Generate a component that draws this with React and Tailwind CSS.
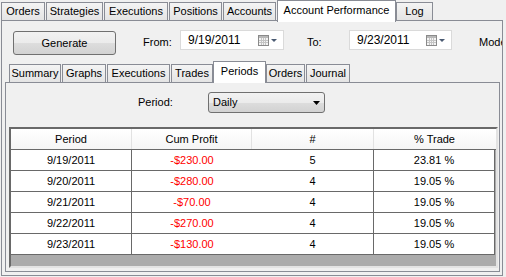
import React from 'react'

const topTabs = [
  { label: 'Orders', cls: 'ml-[1px] w-[44px]' },
  { label: 'Strategies', cls: 'ml-[1px] w-[57px]' },
  { label: 'Executions', cls: 'ml-[1px] w-[64px]' },
  { label: 'Positions', cls: 'ml-[1px] w-[53px]' },
  { label: 'Accounts', cls: 'ml-[1px] w-[53px]' },
  { label: 'Account Performance', cls: 'ml-[1px] w-[119px]', active: true },
  { label: 'Log', cls: 'w-[37px]' },
]

const innerTabs = [
  { label: 'Summary', cls: 'ml-[7px] w-[52px]' },
  { label: 'Graphs', cls: 'ml-[1px] w-[44px]' },
  { label: 'Executions', cls: 'ml-[1px] w-[63px]' },
  { label: 'Trades', cls: 'ml-[1px] w-[42px]' },
  { label: 'Periods', cls: 'w-[53px]', active: true },
  { label: 'Orders', cls: 'w-[39px]' },
  { label: 'Journal', cls: 'ml-[1px] w-[44px]' },
]

const rows = [
  ['9/19/2011', '-$230.00', '5', '23.81 %'],
  ['9/20/2011', '-$280.00', '4', '19.05 %'],
  ['9/21/2011', '-$70.00', '4', '19.05 %'],
  ['9/22/2011', '-$270.00', '4', '19.05 %'],
  ['9/23/2011', '-$130.00', '4', '19.05 %'],
]

function Tab({ label, cls, active, topOffset }) {
  if (active) {
    return (
      <div
        className={`${cls} relative z-10 flex h-[22px] shrink-0 items-start justify-center border border-b-0 border-[#898c95] bg-white pt-[3px] text-[11px] leading-[13px] text-black`}
      >
        {label}
      </div>
    )
  }
  return (
    <div
      className={`${cls} ${topOffset} flex h-[18px] shrink-0 items-center justify-center border border-b-0 border-[#898c95] bg-gradient-to-b from-[#f4f4f4] to-[#e4e4e4] text-[11px] leading-[13px] text-black`}
    >
      {label}
    </div>
  )
}

function CalendarIcon() {
  return (
    <svg width="19" height="11" viewBox="0 0 19 11">
      <rect x="0.5" y="0.5" width="10" height="10" fill="#f4f4f4" stroke="#8a8a8a" />
      <rect x="1" y="1" width="9" height="2" fill="#b8b8b8" />
      <path d="M1 5.5h9M1 7.5h9M3.5 3v7M5.5 3v7M7.5 3v7" stroke="#c4c4c4" />
      <path d="M13 4h6l-3 3z" fill="#4a5a72" />
    </svg>
  )
}

function DateBox({ value, cls }) {
  return (
    <div className={`${cls} flex h-[20px] shrink-0 items-center border border-[#dadada] bg-white pl-[7px] pr-[6px]`}>
      <span className="flex-1 text-[12px] leading-[14px] text-black">{value}</span>
      <CalendarIcon />
    </div>
  )
}

export default function App() {
  return (
    <div className="h-[277px] w-[506px] overflow-hidden bg-[#f0f0f0] font-[family-name:'Liberation_Sans',Arial,sans-serif] text-black">
      <div className="flex h-[20px] items-start">
        {topTabs.map((t) => (
          <Tab key={t.label} {...t} topOffset="mt-[2px]" />
        ))}
      </div>

      <div className="ml-[1px] h-[256px] w-[502px] overflow-hidden border border-[#898c95] bg-[#f0f0f0]">
        <div className="mt-[9px] flex h-[25px] items-start whitespace-nowrap">
          <button className="ml-[11px] mt-[1px] h-[24px] w-[103px] shrink-0 rounded-[3px] border border-[#707070] bg-[linear-gradient(180deg,#f2f2f2_0%,#ebebeb_50%,#dddddd_51%,#d2d2d2_100%)] text-[11px] leading-[13px] text-black">
            Generate
          </button>
          <span className="ml-[27px] mt-[6px] w-[37px] shrink-0 text-[11px] leading-[13px]">From:</span>
          <DateBox value="9/19/2011" cls="w-[104px]" />
          <span className="ml-[23px] mt-[6px] w-[42px] shrink-0 text-[11px] leading-[13px]">To:</span>
          <DateBox value="9/23/2011" cls="w-[103px]" />
          <span className="ml-[27px] mt-[6px] shrink-0 text-[11px] leading-[13px]">Mode</span>
        </div>

        <div className="mt-[6px] flex h-[21px] items-start">
          {innerTabs.map((t) => (
            <Tab key={t.label} {...t} topOffset="mt-[3px]" />
          ))}
        </div>

        <div className="ml-[3px] h-[190px] w-[495px] border border-[#898c95] bg-[#f0f0f0]">
          <div className="mt-[9px] flex h-[21px] items-center">
            <span className="ml-[132px] w-[70px] text-[11px] leading-[13px]">Period:</span>
            <div className="flex h-[21px] w-[117px] items-center justify-between rounded-[3px] border border-[#707070] bg-[linear-gradient(180deg,#f2f2f2_0%,#ebebeb_50%,#dddddd_51%,#d2d2d2_100%)] pl-[4px] pr-[4px]">
              <span className="text-[11px] leading-[13px]">Daily</span>
              <svg width="7" height="4" viewBox="0 0 7 4">
                <path d="M0 0h7L3.5 4z" fill="#000" />
              </svg>
            </div>
          </div>

          <div className="ml-[3px] mt-[14px] h-[141px] w-[489px] border-[2px] border-b-[#e3e3e3] border-l-[#696969] border-r-[#e3e3e3] border-t-[#696969] bg-[#ababab]">
            <div className="flex h-[21px] border-b border-[#696969] bg-gradient-to-b from-white to-[#f5f5f5] text-[11px] leading-[13px]">
              <div className="flex w-[121px] items-center justify-center border-r border-[#e2e2e2]">Period</div>
              <div className="flex w-[120px] items-center justify-center border-r border-[#e2e2e2]">Cum Profit</div>
              <div className="flex w-[122px] items-center justify-center border-r border-[#e2e2e2]">#</div>
              <div className="flex w-[121px] items-center justify-center">% Trade</div>
            </div>
            {rows.map((r) => (
              <div key={r[0]} className="flex h-[21px] w-[484px] border-b border-[#696969] bg-white text-[11px] leading-[13px]">
                <div className="flex w-[121px] items-center justify-center border-r border-[#696969]">{r[0]}</div>
                <div className="flex w-[120px] items-center justify-center text-[#ff0000]">{r[1]}</div>
                <div className="flex w-[122px] items-center justify-center border-r border-[#696969]">{r[2]}</div>
                <div className="flex w-[121px] items-center justify-center border-r border-[#696969]">{r[3]}</div>
              </div>
            ))}
          </div>
        </div>
      </div>
    </div>
  )
}
